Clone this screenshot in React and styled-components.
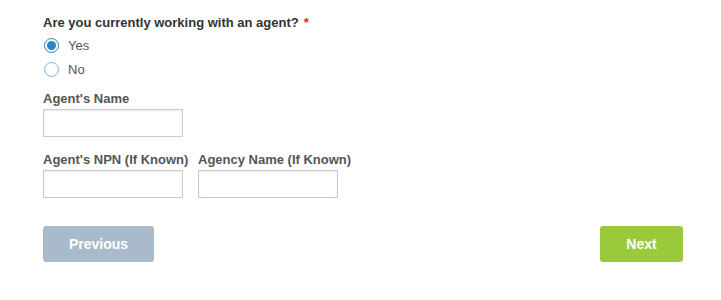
import React, { useState } from "react";
import styled, { createGlobalStyle } from "styled-components";

const Global = createGlobalStyle`
  html, body { margin: 0; padding: 0; background: #fff; }
  body { font-family: "Liberation Sans", Arial, sans-serif; }
  * { box-sizing: border-box; }
`;

const Form = styled.div`
  width: 640px;
  margin-left: 43px;
  padding-top: 15px;
  display: flex;
  flex-direction: column;
`;

const Question = styled.div`
  font-size: 13px;
  line-height: 16px;
  font-weight: bold;
  color: #333;
  margin-bottom: 2px;
`;

const Req = styled.span`
  color: #c0392b;
  margin-left: 5px;
`;

const RadioRow = styled.label`
  display: flex;
  align-items: center;
  height: 24px;
  gap: 9px;
  font-size: 13px;
  color: #555;
  cursor: pointer;
`;

const RadioCircle = styled.span`
  width: 15px;
  height: 15px;
  margin-left: 1px;
  border-radius: 50%;
  border: 1px solid ${(p) => (p.$checked ? "#2a86c6" : "#7fb2d8")};
  background: #fff;
  display: flex;
  align-items: center;
  justify-content: center;
  &::after {
    content: "";
    width: 9px;
    height: 9px;
    border-radius: 50%;
    background: ${(p) => (p.$checked ? "#2a86c6" : "transparent")};
  }
`;

const Row = styled.div`
  display: flex;
  gap: 15px;
  margin-top: ${(p) => p.$top}px;
`;

const Field = styled.div`
  width: 140px;
  display: flex;
  flex-direction: column;
  gap: 3px;
`;

const Label = styled.div`
  font-size: 13px;
  line-height: 14px;
  font-weight: bold;
  color: #555;
  white-space: nowrap;
`;

const Input = styled.input`
  width: 140px;
  height: 28px;
  border: 1px solid #ccc;
  box-shadow: inset 0 1px 2px rgba(0, 0, 0, 0.08);
  padding: 0 6px;
  font-size: 13px;
  font-family: inherit;
  outline: none;
`;

const Buttons = styled.div`
  display: flex;
  justify-content: space-between;
  margin-top: 28px;
`;

const Button = styled.button`
  height: 36px;
  width: ${(p) => p.$w}px;
  border: none;
  border-radius: 3px;
  background: ${(p) => p.$bg};
  color: #fff;
  font-family: inherit;
  font-weight: bold;
  font-size: 14px;
  cursor: pointer;
`;

export default function App() {
  const [val, setVal] = useState("yes");
  return (
    <>
      <Global />
      <Form>
        <Question>
          Are you currently working with an agent?<Req>*</Req>
        </Question>
        <RadioRow onClick={() => setVal("yes")}>
          <RadioCircle $checked={val === "yes"} />
          Yes
        </RadioRow>
        <RadioRow onClick={() => setVal("no")}>
          <RadioCircle $checked={val === "no"} />
          No
        </RadioRow>
        <Row $top={11}>
          <Field>
            <Label>Agent's Name</Label>
            <Input />
          </Field>
        </Row>
        <Row $top={16}>
          <Field>
            <Label>Agent's NPN (If Known)</Label>
            <Input />
          </Field>
          <Field>
            <Label>Agency Name (If Known)</Label>
            <Input />
          </Field>
        </Row>
        <Buttons>
          <Button $w={111} $bg="#a9bacb">Previous</Button>
          <Button $w={83} $bg="#9aca3c">Next</Button>
        </Buttons>
      </Form>
    </>
  );
}
